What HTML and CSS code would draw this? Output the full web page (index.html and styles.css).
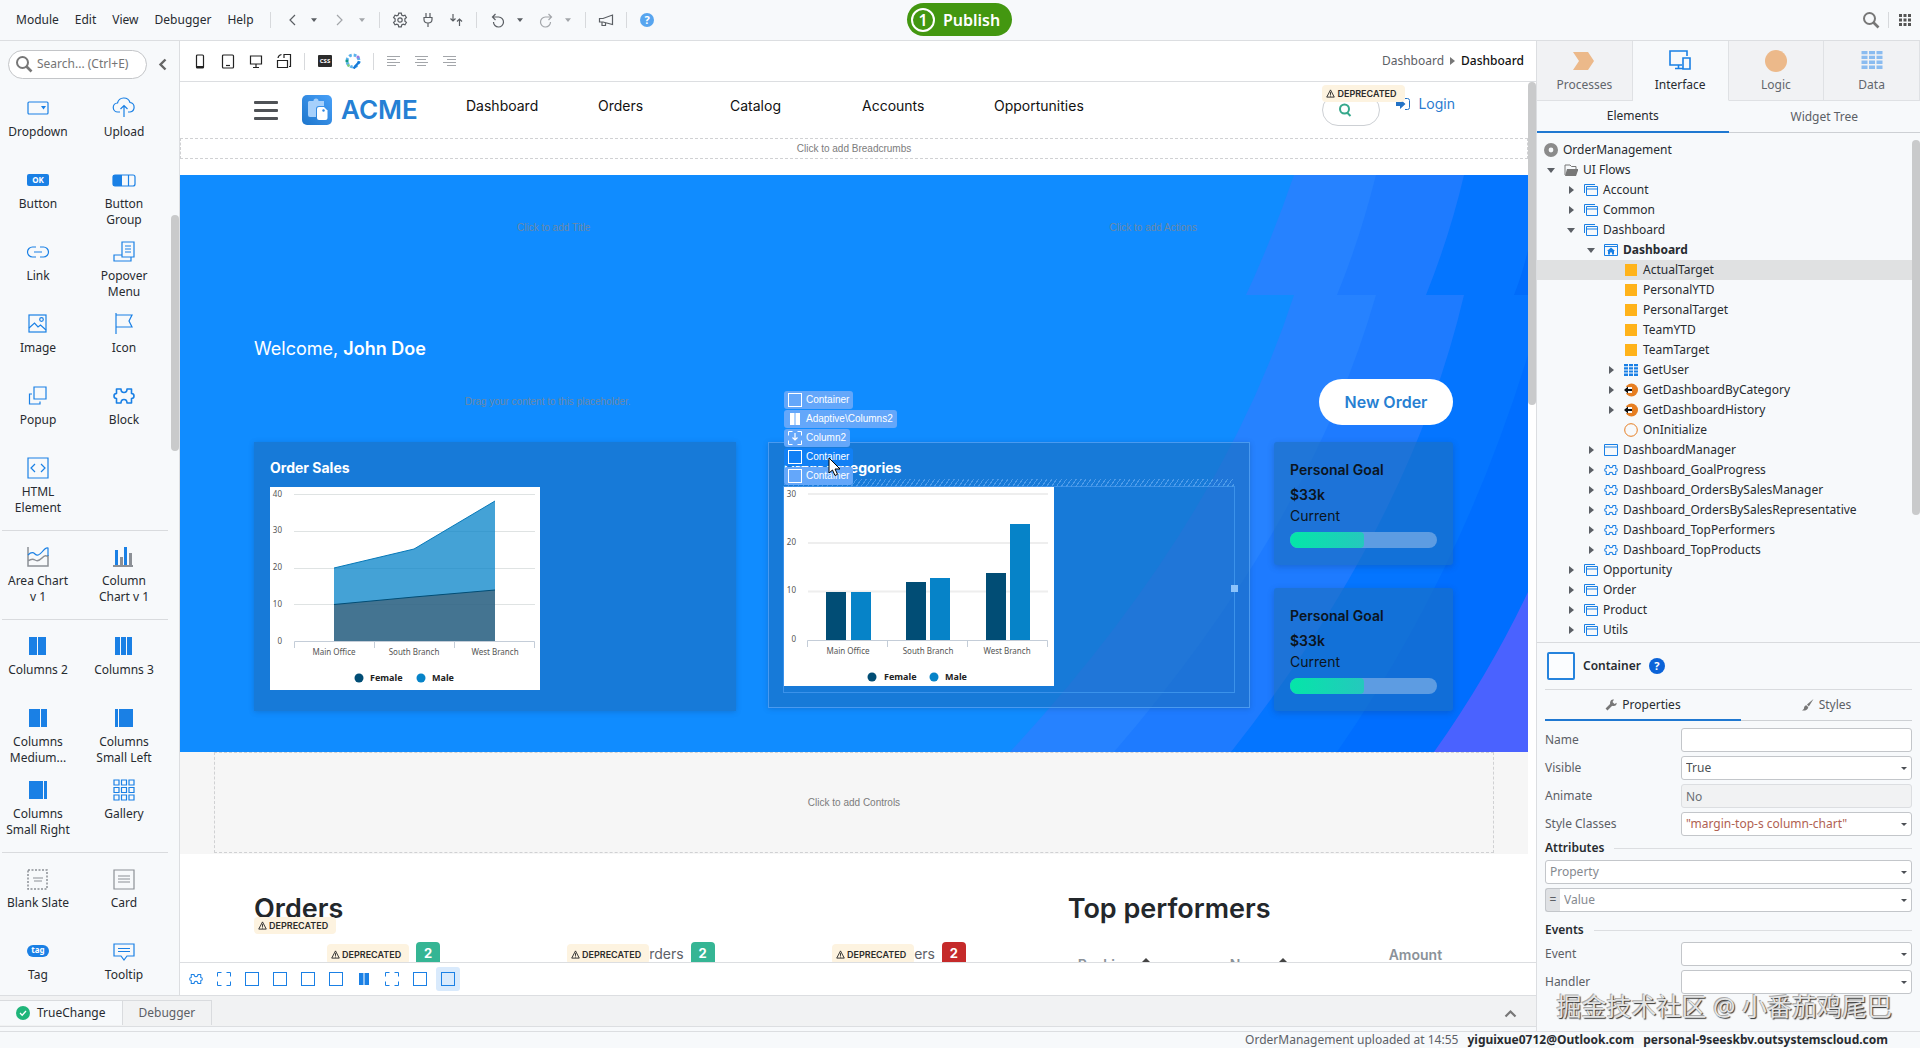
FILE: index.html
```html
<!DOCTYPE html>
<html lang="en">
<head>
    <meta charset="UTF-8">
    <meta name="viewport" content="width=device-width, initial-scale=1.0">
    <title>OrderManagement</title>
    <link rel="stylesheet" href="styles.css">
</head>
<body>
    <svg class="sprite" aria-hidden="true">
        <symbol id="caret" viewBox="0 0 8 5"><path d="M0 0h8L4 5z" fill="currentColor"/></symbol>
        <symbol id="search" viewBox="0 0 18 18"><circle cx="7.5" cy="7.5" r="5.5" fill="none" stroke="currentColor" stroke-width="2"/><path d="M11.5 11.5l5 5" stroke="currentColor" stroke-width="2.6"/></symbol>
        <symbol id="puzzle" viewBox="0 0 22 18"><path d="M3.500 2H8q0 3.500 3 3.500T14 2h4.500v4.500q2.500 0 2.500 2.500t-2.500 2.500V16H14q0-3.500-3-3.500T8 16H3.500v-4.500Q1 11.500 1 9t2.500-2.500z" fill="none" stroke="currentColor" stroke-width="1.600" stroke-linejoin="round"/></symbol>
        <symbol id="box" viewBox="0 0 14 14"><rect x=".5" y=".5" width="13" height="13" fill="none" stroke="currentColor"/></symbol>
        <symbol id="frame" viewBox="0 0 14 14"><path d="M.5 4.500v-4h4M9.500.5h4v4M13.500 9.500v4h-4M4.500 13.500h-4v-4" fill="none" stroke="currentColor"/></symbol>
        <symbol id="cols" viewBox="0 0 14 14"><path d="M2 1h4.500v12H2zM7.500 1H12v12H7.500z" fill="currentColor"/></symbol>
        <symbol id="flow" viewBox="0 0 14 14"><path d="M.5 10V1.500H11M2.500 3.500h11v9h-11zM2.500 6h11" fill="none" stroke="currentColor"/></symbol>
        <symbol id="screen" viewBox="0 0 14 14"><path d="M.5 1.500h13v11H.5zM.5 4h13" fill="none" stroke="currentColor"/></symbol>
        <symbol id="home" viewBox="0 0 14 14"><path d="M.5 1.500h13v11H.5zM.5 3.500h13" fill="none" stroke="currentColor"/><path d="M7 4.500l4 3.500h-1v3.500H8V9.500H6v2H4V8H3z" fill="currentColor"/></symbol>
        <symbol id="grid" viewBox="0 0 14 12"><path d="M0 0h4v2.200H0zM5 0h4v2.200H5zM10 0h4v2.200h-4zM0 3.200h4v2.200H0zM5 3.200h4v2.200H5zM10 3.200h4v2.200h-4zM0 6.400h4v2.200H0zM5 6.400h4v2.200H5zM10 6.400h4v2.200h-4zM0 9.600h4V12H0zM5 9.600h4V12H5zM10 9.600h4V12h-4z" fill="currentColor"/></symbol>
        <symbol id="fetch" viewBox="0 0 14 14"><circle cx="7.500" cy="7" r="6.500" fill="#e67e22"/><path d="M1 4h7v6H1z" fill="#f7f9fb"/><path d="M0 7l4-3.500V6h4v2H4v2.500z" fill="#111"/></symbol>
        <symbol id="ring" viewBox="0 0 14 14"><circle cx="7" cy="7" r="6.300" fill="none" stroke="#e67e22" stroke-width="1"/></symbol>
        <symbol id="warn" viewBox="0 0 10 10"><path d="M5 1l4.200 8H.8zM5 3.500v3M5 7.300v1" fill="none" stroke="#222"/></symbol>
    </svg>

    <header class="menubar">
        <nav class="menus">
            <button>Module</button><button>Edit</button><button>View</button><button>Debugger</button><button>Help</button>
        </nav>
        <div class="tools history">
            <button class="tool" aria-label="Back"><svg width="8" height="12"><path d="M7 1L2 6l5 5" class="ln"/></svg></button>
            <button class="tool drop" aria-label="Back history"><svg width="6" height="4"><use href="#caret"/></svg></button>
            <button class="tool off" aria-label="Forward"><svg width="8" height="12"><path d="M1 1l5 5-5 5" class="ln"/></svg></button>
            <button class="tool drop off" aria-label="Forward history"><svg width="6" height="4"><use href="#caret"/></svg></button>
        </div>
        <div class="tools">
            <button class="tool" aria-label="Settings"><svg width="16" height="16"><path d="M6.700 1.200h2.600l.4 1.900 1.500.8 1.800-.7 1.400 2.300-1.500 1.200v2.600l1.500 1.200-1.400 2.300-1.800-.7-1.500.8-.4 1.900H6.700l-.4-1.900-1.500-.8-1.800.7-1.400-2.300 1.500-1.200V6.700L1.600 5.500 3 3.200l1.800.7 1.500-.8z" class="ln"/><circle cx="8" cy="8" r="2.200" class="ln"/></svg></button>
            <button class="tool" aria-label="Connect"><svg width="12" height="16"><path d="M4 1v4M8 1v4M2 5.500h8v2q0 3.500-4 3.500T2 7.500zM6 11v4" class="ln"/></svg></button>
            <button class="tool" aria-label="Merge"><svg width="14" height="14"><path d="M4 1v7M1.500 5.500L4 8l2.500-2.500M10.500 13V6M8 8.500L10.500 6 13 8.500" class="ln"/></svg></button>
        </div>
        <div class="tools history">
            <button class="tool" aria-label="Undo"><svg width="14" height="15"><path d="M1.500 4h6.200a5 5 0 1 1-5.200 5M4.500 1l-3 3 3 3" class="ln"/></svg></button>
            <button class="tool drop" aria-label="Undo history"><svg width="6" height="4"><use href="#caret"/></svg></button>
            <button class="tool off" aria-label="Redo"><svg width="14" height="15"><path d="M12.500 4H6.300a5 5 0 1 0 5.200 5M9.500 1l3 3-3 3" class="ln"/></svg></button>
            <button class="tool drop off" aria-label="Redo history"><svg width="6" height="4"><use href="#caret"/></svg></button>
        </div>
        <div class="tools">
            <button class="tool" aria-label="News"><svg width="16" height="13"><path d="M14.500 1v9.500L5 8H1.500V4.500H5zM4 8v3.500h3.500V9" class="ln"/></svg></button>
        </div>
        <div class="tools">
            <button class="help" aria-label="Help">?</button>
        </div>
        <button class="publish"><span>1</span>Publish</button>
        <div class="menubar-right">
            <button class="tool" aria-label="Search"><svg width="18" height="18"><use href="#search"/></svg></button>
            <button class="tool apps" aria-label="Apps"><svg width="12" height="12"><path d="M0 0h3v3H0zM4.500 0h3v3h-3zM9 0h3v3H9zM0 4.500h3v3H0zM4.500 4.500h3v3h-3zM9 4.500h3v3H9zM0 9h3v3H0zM4.500 9h3v3h-3zM9 9h3v3H9z" fill="#555"/></svg></button>
        </div>
    </header>

    <div class="workspace">
        <div class="left">
            <div class="upper">
                <aside class="palette">
                    <div class="palette-search">
                        <label class="searchbox"><svg width="18" height="18"><use href="#search"/></svg><input type="text" placeholder="Search... (Ctrl+E)" aria-label="Search widgets"></label>
                        <button class="tool" aria-label="Collapse"><svg width="9" height="13"><path d="M7.500 1.500l-5 5 5 5" fill="none" stroke="#666" stroke-width="2.400"/></svg></button>
                    </div>
                    <div class="widgets">
                        <button class="widget"><svg viewBox="0 0 24 24"><rect x="2" y="6" width="20" height="12" rx="1" class="ln"/><path d="M15 10h5l-2.500 3.500z" fill="currentColor"/></svg><span>Dropdown</span></button>
                        <button class="widget"><svg viewBox="0 0 24 24"><path d="M8 16H6a4.500 4.500 0 0 1-.5-9 6.500 6.500 0 0 1 12.500-.5A4.800 4.800 0 0 1 18 16h-2M12 21V10M8.500 13L12 9.500l3.500 3.500" class="ln"/></svg><span>Upload</span></button>
                        <button class="widget"><svg viewBox="0 0 24 24"><rect x="1" y="6" width="22" height="12" rx="2" fill="currentColor"/><text x="12" y="15" class="ok">OK</text></svg><span>Button</span></button>
                        <button class="widget"><svg viewBox="0 0 24 24"><rect x="1" y="7" width="22" height="11" rx="2" class="ln"/><path d="M1 7h9v11H1z" fill="currentColor"/><path d="M16.500 7v11" class="ln"/></svg><span>Button<br>Group</span></button>
                        <button class="widget"><svg viewBox="0 0 24 24"><path d="M10 7H6.500a5 5 0 0 0 0 10H10M14 7h3.500a5 5 0 0 1 0 10H14M8 12h8" class="ln"/></svg><span>Link</span></button>
                        <button class="widget"><svg viewBox="0 0 24 24"><path d="M10 2h12v15H10zM10 15H2v6h17v-4M13 6h6M13 9h6M13 12h6" class="ln"/></svg><span>Popover<br>Menu</span></button>
                        <button class="widget"><svg viewBox="0 0 24 24"><rect x="3" y="3" width="17" height="17" class="ln"/><circle cx="15.500" cy="7.500" r="1.800" class="ln"/><path d="M3 16l5.500-5 3.500 4 2.500-2 5.500 5" class="ln"/></svg><span>Image</span></button>
                        <button class="widget"><svg viewBox="0 0 24 24"><path d="M4 1v21M4 3h16l-3 6 3 6H4" class="ln"/></svg><span>Icon</span></button>
                        <button class="widget"><svg viewBox="0 0 24 24"><path d="M8 3h12v12H8zM6 10H3.500v10H14v-2.500" class="ln"/></svg><span>Popup</span></button>
                        <button class="widget"><svg viewBox="0 0 24 24"><use href="#puzzle" x="1" y="3" width="22" height="18"/></svg><span>Block</span></button>
                        <button class="widget"><svg viewBox="0 0 24 24"><path d="M2 2h20v20H2zM9 8l-4 4 4 4M15 8l4 4-4 4" class="ln"/></svg><span>HTML<br>Element</span></button>
                    </div>
                    <div class="widgets">
                        <button class="widget"><svg viewBox="0 0 24 24"><path d="M2 2v19h20V10M2 16q4-3 7-1t7-2 6-1" fill="none" stroke="#8c9096" stroke-width="1.500"/><path d="M2 10q4-4 7-1t7-2 6-4v8" class="ln"/></svg><span>Area Chart<br>v 1</span></button>
                        <button class="widget"><svg viewBox="0 0 24 24"><path d="M3 5h3v15H3zM12 2h3v18h-3z" fill="currentColor"/><path d="M8 12h3v8H8zM17 8h3v12h-3zM1 20h20v2H1z" fill="#8c9096"/></svg><span>Column<br>Chart v 1</span></button>
                    </div>
                    <div class="widgets">
                        <button class="widget"><svg viewBox="0 0 24 24"><path d="M3 3h8v18H3zM12 3h8v18h-8z" fill="currentColor"/></svg><span>Columns 2</span></button>
                        <button class="widget"><svg viewBox="0 0 24 24"><path d="M3 3h5v18H3zM9 3h5v18H9zM15 3h5v18h-5z" fill="currentColor"/></svg><span>Columns 3</span></button>
                        <button class="widget"><svg viewBox="0 0 24 24"><path d="M3 3h11v18H3zM15 3h6v18h-6z" fill="currentColor"/></svg><span>Columns<br>Medium...</span></button>
                        <button class="widget"><svg viewBox="0 0 24 24"><path d="M3 3h3v18H3zM7 3h14v18H7z" fill="currentColor"/></svg><span>Columns<br>Small Left</span></button>
                        <button class="widget"><svg viewBox="0 0 24 24"><path d="M3 3h14v18H3zM18 3h3v18h-3z" fill="currentColor"/></svg><span>Columns<br>Small Right</span></button>
                        <button class="widget"><svg viewBox="0 0 24 24"><path d="M2 2h5v5H2zM9.500 2h5v5h-5zM17 2h5v5h-5zM2 9.500h5v5H2zM9.500 9.500h5v5h-5zM17 9.500h5v5h-5zM2 17h5v5H2zM9.500 17h5v5h-5zM17 17h5v5h-5z" class="ln"/></svg><span>Gallery</span></button>
                    </div>
                    <div class="widgets last">
                        <button class="widget gray"><svg viewBox="0 0 24 24"><rect x="2" y="3" width="19" height="19" fill="none" stroke="currentColor" stroke-width="1.500" stroke-dasharray="2 1.500"/><path d="M7 11h10M8 14h8" class="ln"/></svg><span>Blank Slate</span></button>
                        <button class="widget gray"><svg viewBox="0 0 24 24"><path d="M2 3h20v19H2zM6 9h12M6 12h12M6 15h12" class="ln"/></svg><span>Card</span></button>
                        <button class="widget"><svg viewBox="0 0 24 24"><rect x="1" y="6" width="22" height="12" rx="6" fill="currentColor"/><text x="12" y="14" class="ok">tag</text></svg><span>Tag</span></button>
                        <button class="widget"><svg viewBox="0 0 24 24"><path d="M2 5h20v12h-7l-3 4-3-4H2zM6 9.500h12M6 12.500h12" class="ln"/></svg><span>Tooltip</span></button>
                    </div>
                    <div class="bar palette-bar"></div>
                </aside>

                <main class="editor">
                    <div class="editor-tools">
                        <button class="tool dark" aria-label="Phone"><svg width="10" height="15"><rect x="1.500" y="1" width="7" height="13" rx="1" class="ln"/><path d="M1.500 12h7v2h-7z" fill="currentColor"/></svg></button>
                        <button class="tool dark" aria-label="Tablet"><svg width="14" height="15"><rect x="1.500" y="1" width="11" height="13" rx="1" class="ln"/><path d="M5 11.500h4" class="ln"/></svg></button>
                        <button class="tool dark" aria-label="Desktop"><svg width="14" height="15"><path d="M1.500 2h11v8h-11zM7 10v3M4 13.500h6" class="ln"/></svg></button>
                        <button class="tool dark" aria-label="Rotate"><svg width="16" height="16"><path d="M1.500 7.500h10v7h-10zM8 5V1.500h6.500v12H13M2 5q.5-3 3.500-3.500" class="ln"/></svg></button>
                        <span class="sep"></span>
                        <button class="css-btn">CSS</button>
                        <button class="tool" aria-label="Theme"><svg width="16" height="16"><circle cx="8" cy="8" r="6" fill="none" stroke="#5bb2ec" stroke-width="3" stroke-dasharray="2.700 2.010"/><path d="M8.500 15.500l6-7" stroke="#1679d8" stroke-width="2.400"/><circle cx="2" cy="8" r="1.600" fill="#0f9a8a"/><circle cx="3.500" cy="12.500" r="1.400" fill="#7fc97f"/><circle cx="13" cy="4" r="1.600" fill="#9d7ae0"/></svg></button>
                        <span class="sep"></span>
                        <button class="tool off" aria-label="Align left"><svg width="14" height="12"><path d="M0 1.500h13M0 4.500h9M0 7.500h13M0 10.500h9" class="ln"/></svg></button>
                        <button class="tool off" aria-label="Align center"><svg width="14" height="12"><path d="M0 1.500h13M2 4.500h9M0 7.500h13M2 10.500h9" class="ln"/></svg></button>
                        <button class="tool off" aria-label="Align right"><svg width="14" height="12"><path d="M0 1.500h13M4 4.500h9M0 7.500h13M4 10.500h9" class="ln"/></svg></button>
                        <div class="crumbs"><span>Dashboard</span><svg width="5" height="8"><path d="M0 0l5 4-5 4z" fill="#777"/></svg><b>Dashboard</b></div>
                    </div>

                    <div class="canvas">
                        <div class="page">
                            <header class="app-header">
                                <button class="burger" aria-label="Menu"><i></i><i></i><i></i></button>
                                <svg class="logo" viewBox="0 0 30 30"><defs><linearGradient id="lg" x1="0" y1="1" x2="1" y2="0"><stop offset="0" stop-color="#1e76cc"/><stop offset="1" stop-color="#48a0f8"/></linearGradient></defs><rect width="30" height="30" rx="5" fill="url(#lg)"/><path d="M7 6h4.500a2.500 2.500 0 0 1 5 0H22v5h-5q-3 0-3 3v8H8q-2 0-2-2V7z" fill="#a6d0fb"/><path d="M17 12h5l3.500 3.500V23q0 2-2 2H17q-2 0-2-2v-9q0-2 2-2z" fill="#fff"/><circle cx="21.500" cy="15.500" r="1.200" fill="#2f86df"/></svg>
                                <span class="brand">ACME</span>
                                <nav class="app-nav"><a href="#">Dashboard</a><a href="#">Orders</a><a href="#">Catalog</a><a href="#">Accounts</a><a href="#">Opportunities</a></nav>
                                <div class="header-end">
                                    <div class="app-search">
                                        <svg width="14" height="14" viewBox="0 0 14 14"><circle cx="6.500" cy="6" r="4.500" fill="none" stroke="#35a88b" stroke-width="2"/><path d="M9 9.500l3.500 3.500" stroke="#35a88b" stroke-width="2"/></svg>
                                        <span class="deprecated"><svg width="9" height="9"><use href="#warn"/></svg>DEPRECATED</span>
                                    </div>
                                    <a class="login" href="#"><svg width="14" height="12"><path d="M0 4h4V1l5.500 5L4 11V8H0z" fill="#2272c6"/><path d="M9 .5h2.500q2 0 2 2v7q0 2-2 2H9" fill="none" stroke="#2272c6"/></svg>Login</a>
                                </div>
                            </header>
                            <div class="slot breadcrumbs">Click to add Breadcrumbs</div>

                            <section class="hero">
                                <svg class="stripes" viewBox="0 0 548 577" aria-hidden="true">
                                    <path d="M314 0h234v120H266Q292 64 314 0z" fill="#2682ff"/>
                                    <path d="M396 0h152v120H357Q380 64 396 0z" fill="#1e7bff"/>
                                    <path d="M484 0h64v120H446Q470 60 484 0z" fill="#0475ff"/>
                                    <path d="M548 75v45h-14q8-20 14-45z" fill="#006cfb"/>
                                    <path d="M314 120h234v457H30Q240 350 314 120z" fill="#2682ff"/>
                                    <path d="M396 120h152v457H134Q330 350 396 120z" fill="#1e7bff"/>
                                    <path d="M484 120h64v457H251Q430 350 484 120z" fill="#0475ff"/>
                                    <path d="M548 180v397H357Q480 400 548 180z" fill="#006eff"/>
                                    <path d="M548 417v160h-94q54-76 94-160z" fill="#4a62ff"/>
                                </svg>
                                <div class="hero-row">
                                    <div class="ghost">Click to add Title</div>
                                    <div class="ghost">Click to add Actions</div>
                                </div>
                                <p class="welcome">Welcome, <b>John Doe</b></p>
                                <div class="hero-actions">
                                    <div class="ghost">Drag your content to this placeholder.</div>
                                    <button class="new-order">New Order</button>
                                </div>
                                <div class="cards">
                                    <div class="charts">
                                        <article class="card">
                                            <h3>Order Sales</h3>
                                            <svg class="chart chart-area" width="270" height="203" viewBox="0 0 270 203">
                                                <path d="M24 7.500h241M24 44.500h241M24 81.500h241M24 117.500h241" class="gridline"/>
                                                <path d="M64 81l80-19 81-48v140H64z" fill="#0683c8" fill-opacity=".75"/>
                                                <path d="M64 117.500l80-7.500 81-7v51H64z" fill="#454f5a" fill-opacity=".55"/>
                                                <path d="M64 81l80-19 81-48" fill="none" stroke="#0678b8"/>
                                                <path d="M64 117.500l80-7.500 81-7" fill="none" stroke="#014d75"/>
                                                <path d="M24.500 161v-6.500h240v6.500M104.500 154.500v6.500M184.500 154.500v6.500" class="axis"/>
                                                <g class="ylab"><text x="12" y="10">40</text><text x="12" y="46">30</text><text x="12" y="83">20</text><text x="12" y="120">10</text><text x="12" y="157">0</text></g>
                                                <g class="xlab"><text x="64" y="168">Main Office</text><text x="144" y="168">South Branch</text><text x="225" y="168">West Branch</text></g>
                                                <circle cx="89" cy="191" r="4.500" fill="#014d75"/><circle cx="151" cy="191" r="4.500" fill="#0683c8"/>
                                                <g class="legend"><text x="100" y="194">Female</text><text x="162" y="194">Male</text></g>
                                            </svg>
                                        </article>
                                        <article class="card outlined">
                                            <h3>Order Categories</h3>
                                            <div class="selected-box">
                                                <svg class="chart" width="270" height="199" viewBox="0 0 270 199">
                                                    <path d="M24 7h240M24 56h240M24 104.500h240" class="gridline thick"/>
                                                    <path d="M42 105h20v48H42zM122 95h20v58h-20zM202 86h20v67h-20z" fill="#014d75"/>
                                                    <path d="M67 105h20v48H67zM146 91h20v62h-20zM226 37h20v116h-20z" fill="#0683c8"/>
                                                    <path d="M23.500 160v-6.500h240v6.500M103.500 153.500v6.500M183.500 153.500v6.500" class="axis"/>
                                                    <g class="ylab"><text x="12" y="10">30</text><text x="12" y="58">20</text><text x="12" y="106">10</text><text x="12" y="155">0</text></g>
                                                    <g class="xlab"><text x="64" y="167">Main Office</text><text x="144" y="167">South Branch</text><text x="223" y="167">West Branch</text></g>
                                                    <circle cx="88" cy="190" r="4.500" fill="#014d75"/><circle cx="150" cy="190" r="4.500" fill="#0683c8"/>
                                                    <g class="legend"><text x="100" y="193">Female</text><text x="161" y="193">Male</text></g>
                                                </svg>
                                                <span class="handle"></span>
                                            </div>
                                            <div class="chips">
                                                <span class="chip"><svg width="14" height="14"><use href="#box"/></svg>Container</span>
                                                <span class="chip"><svg width="14" height="14"><use href="#cols"/></svg>Adaptive\Columns2</span>
                                                <span class="chip"><svg width="14" height="14"><use href="#frame"/><path d="M7 2v7M4.500 6.500L7 9l2.500-2.500" class="ln"/></svg>Column2</span>
                                                <span class="chip active"><svg width="14" height="14"><use href="#box"/></svg>Container</span>
                                                <span class="chip"><svg width="14" height="14"><use href="#box"/></svg>Container</span>
                                            </div>
                                            <svg class="cursor" width="13" height="20"><path d="M1 1v15l3.500-3 2.500 5.500 2.500-1.200L7 12h5z" fill="#fff" stroke="#000"/></svg>
                                        </article>
                                    </div>
                                    <div class="goals">
                                        <article class="goal"><h4>Personal Goal</h4><strong>$33k</strong><span>Current</span><div class="meter"><i></i></div></article>
                                        <article class="goal"><h4>Personal Goal</h4><strong>$33k</strong><span>Current</span><div class="meter"><i></i></div></article>
                                    </div>
                                </div>
                            </section>

                            <section class="controls"><div class="slot">Click to add Controls</div></section>

                            <section class="lists">
                                <div class="orders">
                                    <h2>Orders<span class="deprecated"><svg width="9" height="9"><use href="#warn"/></svg>DEPRECATED</span></h2>
                                    <div class="order-tabs">
                                        <div><span class="deprecated"><svg width="9" height="9"><use href="#warn"/></svg>DEPRECATED</span><b class="count">2</b></div>
                                        <div><span class="deprecated"><svg width="9" height="9"><use href="#warn"/></svg>DEPRECATED</span>rders<b class="count">2</b></div>
                                        <div><span class="deprecated"><svg width="9" height="9"><use href="#warn"/></svg>DEPRECATED</span>ers<b class="count red">2</b></div>
                                    </div>
                                </div>
                                <div class="performers">
                                    <h2>Top performers</h2>
                                    <table>
                                        <tr><th class="sortable">Ranking<i></i></th><th class="sortable">Name<i></i></th><th class="amount">Amount</th></tr>
                                    </table>
                                </div>
                            </section>
                        </div>
                        <div class="gutter"><div class="bar canvas-bar"></div></div>
                    </div>

                    <div class="path">
                        <button aria-label="Block"><svg width="14" height="14"><use href="#puzzle"/></svg></button>
                        <button aria-label="Placeholder"><svg width="14" height="14"><use href="#frame"/></svg></button>
                        <button aria-label="Container"><svg width="14" height="14"><use href="#box"/></svg></button>
                        <button aria-label="Container"><svg width="14" height="14"><use href="#box"/></svg></button>
                        <button aria-label="Container"><svg width="14" height="14"><use href="#box"/></svg></button>
                        <button aria-label="Container"><svg width="14" height="14"><use href="#box"/></svg></button>
                        <button aria-label="Columns"><svg width="14" height="14"><use href="#cols"/></svg></button>
                        <button aria-label="Placeholder"><svg width="14" height="14"><use href="#frame"/></svg></button>
                        <button aria-label="Container"><svg width="14" height="14"><use href="#box"/></svg></button>
                        <button class="current" aria-label="Container"><svg width="14" height="14"><use href="#box"/></svg></button>
                    </div>
                </main>
            </div>

            <div class="dock">
                <button class="dock-tab on"><svg width="14" height="14"><circle cx="7" cy="7" r="7" fill="#1fb57a"/><path d="M4 7l2.200 2.200L10 5" fill="none" stroke="#fff" stroke-width="1.300"/></svg>TrueChange</button>
                <button class="dock-tab">Debugger</button>
                <button class="tool expand" aria-label="Expand"><svg width="13" height="9"><path d="M1.500 7.500l5-5 5 5" fill="none" stroke="#777" stroke-width="2.200"/></svg></button>
            </div>
        </div>

        <aside class="inspector">
            <div class="layers">
                <button><svg width="22" height="20"><path d="M0 1h15l6 9-6 9H0l6-9z" fill="#ecb98a"/></svg>Processes</button>
                <button class="on"><svg width="22" height="20"><path d="M13 15H1V1h17v5M6 18.500h8M9.500 15v3M14 8h7v11h-7z" fill="none" stroke="#1a80e5" stroke-width="1.600"/></svg>Interface</button>
                <button><svg width="22" height="22"><circle cx="11" cy="11" r="11" fill="#ecb98a"/></svg>Logic</button>
                <button><svg width="22" height="18" class="pale"><use href="#grid"/></svg>Data</button>
            </div>
            <div class="subtabs"><button class="on">Elements</button><button>Widget Tree</button></div>

            <div class="tree-wrap">
                <ul class="tree">
                    <li class="l0"><svg class="ic"><circle cx="7" cy="7" r="4.700" fill="none" stroke="#8b8b8b" stroke-width="4.600"/></svg>OrderManagement</li>
                    <li class="l0 open"><svg class="ic"><path d="M1 12V2h5l1.500 1.500H12V6" fill="none" stroke="#777"/><path d="M3 6h11.500L12 13H1z" fill="#777"/></svg>UI Flows</li>
                    <li class="l1 shut"><svg class="ic"><use href="#flow"/></svg>Account</li>
                    <li class="l1 shut"><svg class="ic"><use href="#flow"/></svg>Common</li>
                    <li class="l1 open"><svg class="ic"><use href="#flow"/></svg>Dashboard</li>
                    <li class="l2 open"><svg class="ic"><use href="#home"/></svg><b>Dashboard</b></li>
                    <li class="l4 picked"><i class="sq"></i>ActualTarget</li>
                    <li class="l4"><i class="sq"></i>PersonalYTD</li>
                    <li class="l4"><i class="sq"></i>PersonalTarget</li>
                    <li class="l4"><i class="sq"></i>TeamYTD</li>
                    <li class="l4"><i class="sq"></i>TeamTarget</li>
                    <li class="l3 shut"><svg class="ic"><use href="#grid"/></svg>GetUser</li>
                    <li class="l3 shut"><svg class="ic"><use href="#fetch"/></svg>GetDashboardByCategory</li>
                    <li class="l3 shut"><svg class="ic"><use href="#fetch"/></svg>GetDashboardHistory</li>
                    <li class="l4"><svg class="ic"><use href="#ring"/></svg>OnInitialize</li>
                    <li class="l2 shut"><svg class="ic"><use href="#screen"/></svg>DashboardManager</li>
                    <li class="l2 shut"><svg class="ic"><use href="#puzzle"/></svg>Dashboard_GoalProgress</li>
                    <li class="l2 shut"><svg class="ic"><use href="#puzzle"/></svg>Dashboard_OrdersBySalesManager</li>
                    <li class="l2 shut"><svg class="ic"><use href="#puzzle"/></svg>Dashboard_OrdersBySalesRepresentative</li>
                    <li class="l2 shut"><svg class="ic"><use href="#puzzle"/></svg>Dashboard_TopPerformers</li>
                    <li class="l2 shut"><svg class="ic"><use href="#puzzle"/></svg>Dashboard_TopProducts</li>
                    <li class="l1 shut"><svg class="ic"><use href="#flow"/></svg>Opportunity</li>
                    <li class="l1 shut"><svg class="ic"><use href="#flow"/></svg>Order</li>
                    <li class="l1 shut"><svg class="ic"><use href="#flow"/></svg>Product</li>
                    <li class="l1 shut"><svg class="ic"><use href="#flow"/></svg>Utils</li>
                </ul>
                <div class="gutter"><div class="bar tree-bar"></div></div>
            </div>

            <section class="props">
                <div class="props-head"><span class="big-box"></span><b>Container</b><button class="help deep" aria-label="Help">?</button></div>
                <div class="prop-tabs">
                    <button class="on"><svg width="12" height="12"><path d="M1.500 10.500L7 5" stroke="#777" stroke-width="2.600"/><path d="M9 .5a3.300 3.300 0 1 0 2.700 3.300L9.500 5 7.500 3z" fill="#777"/></svg>Properties</button>
                    <button><svg width="12" height="12"><path d="M11.500 0L5 5.500 6.800 7.500z" fill="#777"/><path d="M4.300 6.200l2 2Q5.500 12 0 11.500 2.500 10 2.200 8q.6-1.600 2.100-1.800z" fill="#777"/></svg>Styles</button>
                </div>
                <div class="field"><label for="f-name">Name</label><input id="f-name" type="text"></div>
                <div class="field"><label for="f-vis">Visible</label><span class="combo"><select id="f-vis"><option>True</option></select></span></div>
                <div class="field"><label for="f-anim">Animate</label><input id="f-anim" type="text" value="No" disabled></div>
                <div class="field"><label for="f-cls">Style Classes</label><span class="combo"><select id="f-cls" class="code"><option>"margin-top-s column-chart"</option></select></span></div>
                <h5>Attributes</h5>
                <div class="field"><span class="combo"><select class="hint" aria-label="Property"><option>Property</option></select></span></div>
                <div class="field"><span class="combo with-eq"><span class="eq">=</span><select class="hint" aria-label="Value"><option>Value</option></select></span></div>
                <h5 class="events">Events</h5>
                <div class="field"><label for="f-ev">Event</label><span class="combo"><select id="f-ev"><option></option></select></span></div>
                <div class="field"><label for="f-hd">Handler</label><span class="combo"><select id="f-hd"><option></option></select></span></div>
            </section>
        </aside>
    </div>

    <footer class="status"><span>OrderManagement uploaded at 14:55</span><b>yiguixue0712@Outlook.com</b><b>personal-9seeskbv.outsystemscloud.com</b></footer>
    <div class="watermark">掘金技术社区 @ 小番茄鸡尾巴</div>
</body>
</html>
```
FILE: styles.css
```css
* {
    box-sizing: border-box;
}

body {
    margin: 0;
    height: 100vh;
    display: flex;
    flex-direction: column;
    overflow: hidden;
    background: #f7f9fb;
    color: #272b30;
    font: 12px/16px "Noto Sans", sans-serif;
}

button, input, select {
    font: inherit;
    color: inherit;
    margin: 0;
}
button {
    background: none;
    border: 0;
    padding: 0;
    white-space: nowrap;
}
svg { display: block; flex: none; }
a { text-decoration: none; }
.sprite { position: absolute; width: 0; height: 0; }
.ln { fill: none; stroke: currentColor; stroke-width: 1.2; }

.bar {
    width: 8px;
    border-radius: 4px;
    background: #c9cacb;
}
.gutter { width: 8px; flex: none; }

/* menu bar */
.menubar {
    position: relative;
    flex: none;
    height: 41px;
    display: flex;
    align-items: center;
    border-bottom: 1px solid #dcdee1;
    padding: 0 10px 0 16px;
}
.menus {
    display: flex;
    gap: 16px;
    width: 254px;
}
.tools {
    display: flex;
    align-items: center;
    height: 16px;
    border-left: 1px solid #d7d9dc;
    padding: 0 6px;
}
.tool {
    width: 28px;
    height: 24px;
    display: flex;
    align-items: center;
    justify-content: center;
    color: #5a5e63;
}
.tool.off { color: #a3a6aa; }
.tool.dark { color: #222; }
.history { padding: 0 7px 0 9px; }
.history .tool { width: 24px; }
.history .drop { width: 20px; }
.history .drop + .tool { margin-left: 4px; }
.help {
    width: 14px;
    height: 14px;
    margin: 0 7px;
    border-radius: 50%;
    background: #57a5ef;
    color: #fff;
    font-weight: bold;
    font-size: 11px;
    line-height: 14px;
}
.help.deep {
    width: 16px;
    height: 16px;
    line-height: 16px;
    background: #0b63d8;
}
.publish {
    position: absolute;
    left: 907px;
    top: 3px;
    height: 33px;
    padding: 0 12px 0 4px;
    display: flex;
    align-items: center;
    gap: 8px;
    border-radius: 17px;
    background: #439710;
    color: #fff;
    font-weight: 600;
    font-size: 16px;
}
.publish span {
    width: 24px;
    height: 24px;
    line-height: 20px;
    border: 2px solid #fff;
    border-radius: 50%;
}
.menubar-right {
    margin-left: auto;
    display: flex;
    align-items: center;
}
.menubar-right .tool { color: #777; }
.menubar-right .apps {
    width: 22px;
    height: 16px;
    margin-left: 3px;
    padding-left: 10px;
    border-left: 1px solid #d7d9dc;
}

.workspace {
    flex: 1;
    min-height: 0;
    display: flex;
}
.left {
    flex: 1;
    min-width: 0;
    display: flex;
    flex-direction: column;
}
.upper {
    flex: 1;
    min-height: 0;
    display: flex;
}

/* widget palette */
.palette {
    position: relative;
    width: 180px;
    flex: none;
    overflow: hidden;
    border-right: 1px solid #dcdee1;
}
.palette-search {
    display: flex;
    align-items: center;
    height: 49px;
    padding: 0 0 3px 8px;
}
.searchbox {
    width: 139px;
    height: 29px;
    display: flex;
    align-items: center;
    gap: 4px;
    padding-left: 6px;
    border: 1px solid #c3c5c8;
    border-radius: 15px;
    background: #fff;
    color: #777;
}
.searchbox input {
    width: 108px;
    border: 0;
    padding: 0;
    background: none;
}
.palette-search .tool { width: 31px; }
.widgets {
    display: grid;
    grid-template-columns: 72px 100px;
    padding: 8px 0;
    border-bottom: 1px solid #d9dbde;
    width: 166px;
    margin-left: 2px;
}
.palette-search + .widgets { padding-top: 0; }
.widgets.last { border: 0; }
.widget {
    height: 72px;
    padding-top: 6px;
    display: flex;
    flex-direction: column;
    align-items: center;
    justify-content: flex-start;
    gap: 4px;
    line-height: 16px;
}
.widget svg {
    width: 24px;
    height: 24px;
    color: #1a80e5;
}
.widget.gray svg { color: #8c9096; }
.ok {
    fill: #fff;
    font-size: 8px;
    font-weight: bold;
    text-anchor: middle;
}
.palette-bar {
    position: absolute;
    right: 0;
    top: 174px;
    height: 236px;
}

/* editor */
.editor {
    flex: 1;
    min-width: 0;
    display: flex;
    flex-direction: column;
    background: #fff;
}
.editor-tools {
    flex: none;
    height: 41px;
    padding: 0 12px 0 6px;
    display: flex;
    align-items: center;
    border-bottom: 1px solid #dcdee1;
}
.sep {
    width: 1px;
    height: 17px;
    margin: 0 6px;
    background: #d7d9dc;
}
.css-btn {
    width: 14px;
    height: 12px;
    margin: 0 7px;
    border-radius: 1px;
    background: #2b2b2b;
    color: #fff;
    font-size: 6px;
    line-height: 12px;
    font-weight: bold;
}
.crumbs {
    margin-left: auto;
    display: flex;
    align-items: center;
    gap: 6px;
    color: #5c6066;
}
.crumbs b { font-weight: 500; color: #111; }

.canvas {
    flex: 1;
    min-height: 0;
    display: flex;
    overflow: hidden;
}
.page {
    flex: 1;
    min-width: 0;
    font-family: Inter, sans-serif;
    font-size: 14px;
    line-height: 20px;
}
.canvas-bar { height: 323px; }

.app-header {
    height: 56px;
    padding: 0 73px 0 74px;
    display: flex;
    align-items: center;
}
.burger {
    width: 24px;
    margin-right: 24px;
    display: flex;
    flex-direction: column;
    gap: 5px;
}
.burger i {
    height: 3px;
    border-radius: 1px;
    background: #4f5256;
}
.logo { width: 30px; height: 30px; }
.brand {
    width: 134px;
    padding-left: 9px;
    color: #2580d4;
    font-size: 26px;
    font-weight: 600;
}
.app-nav {
    display: grid;
    grid-template-columns: repeat(5, 132px);
    margin-bottom: 8px;
}
.app-nav a { color: #111; }
.header-end {
    margin-left: auto;
    display: flex;
    gap: 16px;
    align-items: center;
}
.app-search {
    position: relative;
    width: 58px;
    height: 32px;
    padding: 8px 15px;
    border: 1px solid #cdd0d4;
    border-radius: 16px;
}
.app-search .deprecated {
    position: absolute;
    left: -1px;
    top: -10px;
}
.deprecated {
    display: inline-flex;
    align-items: center;
    gap: 2px;
    height: 17px;
    padding: 0 8px 0 4px;
    border-radius: 4px;
    background: #fdf3e0;
    color: #2b2b2b;
    font-size: 9px;
    line-height: 17px;
    font-weight: 600;
}
.login {
    display: flex;
    align-items: center;
    gap: 8px;
    margin-bottom: 12px;
    color: #2b7bd0;
}

.slot {
    display: flex;
    align-items: center;
    justify-content: center;
    border: 1px dashed #d0d1d3;
    color: #7c7c7c;
    font: 10px/12px "Liberation Sans", sans-serif;
}
.breadcrumbs { height: 21px; }

.hero {
    position: relative;
    height: 577px;
    margin-top: 16px;
    padding: 31px 75px 0 74px;
    background: #108cff;
}
.stripes {
    position: absolute;
    right: 0;
    top: 0;
    width: 548px;
    height: 577px;
}
.hero > div, .hero > p { position: relative; }
.hero-row {
    display: grid;
    grid-template-columns: 1fr 1fr;
}
.ghost {
    height: 44px;
    display: flex;
    align-items: center;
    justify-content: center;
    color: #6d89a6;
    font: 10px/12px "Liberation Sans", sans-serif;
}
.welcome {
    margin: 85px 0 17px;
    color: #fff;
    font-size: 18px;
    line-height: 27px;
}
.welcome b { font-weight: 600; }
.hero-actions {
    display: grid;
    grid-template-columns: 49fr 51fr;
    align-items: center;
    height: 46px;
}
.new-order {
    justify-self: end;
    width: 134px;
    height: 46px;
    border-radius: 23px;
    background: #fff;
    color: #2780d2;
    font-size: 16px;
    font-weight: 600;
}
.cards {
    display: flex;
    align-items: flex-start;
    gap: 24px;
    margin-top: 17px;
}
.charts {
    flex: 1;
    display: grid;
    grid-template-columns: 1fr 1fr;
    gap: 32px;
    align-items: start;
}
.card {
    position: relative;
    padding: 16px;
    background: rgba(28, 110, 190, 0.6);
    box-shadow: 0 1px 5px rgba(20, 70, 130, 0.3);
}
.card.outlined {
    outline: 1px solid #4a9af0;
    outline-offset: -1px;
}
.card h3 {
    margin: 0 0 9px;
    color: #fff;
    font-size: 14px;
    line-height: 20px;
    font-weight: 700;
}
.chart {
    background: #fff;
    font-family: "Noto Sans", sans-serif;
}
.chart-area { margin-bottom: 5px; }
.gridline { stroke: #dfe3e3; fill: none; }
.gridline.thick { stroke: #eee; stroke-width: 2; }
.axis { stroke: #c4cdd8; fill: none; }
.ylab, .xlab { font-size: 8px; fill: #555; text-anchor: middle; }
.ylab { text-anchor: end; }
.legend { font-size: 9px; font-weight: bold; fill: #222; }

.selected-box {
    position: relative;
    height: 205px;
    outline: 1px solid #3b92ea;
}
.selected-box::before {
    content: '';
    position: absolute;
    left: 0;
    right: 0;
    top: -8px;
    height: 8px;
    background: repeating-linear-gradient(125deg, transparent 0 3px, #4d9be9 3px 4px);
}
.handle {
    position: absolute;
    right: -4px;
    top: 98px;
    width: 7px;
    height: 7px;
    background: #8cc3fb;
}
.chips {
    position: absolute;
    left: 16px;
    top: -51px;
    display: flex;
    flex-direction: column;
    align-items: flex-start;
    gap: 1px;
}
.chip {
    height: 18px;
    padding: 0 4px;
    display: flex;
    align-items: center;
    gap: 4px;
    border-radius: 3px;
    background: #64a7fa;
    color: #fff;
    font: 10px/18px "Liberation Sans", sans-serif;
}
.chip.active { background: #1180f5; }
.cursor {
    position: absolute;
    left: 60px;
    top: 15px;
}

.goals {
    width: 179px;
    display: flex;
    flex-direction: column;
    gap: 23px;
}
.goal {
    height: 123px;
    padding: 16px;
    display: flex;
    flex-direction: column;
    border-radius: 3px;
    background: rgba(28, 110, 190, 0.6);
    box-shadow: 0 2px 6px rgba(20, 60, 120, 0.3);
    color: #0b1420;
}
.goal h4 {
    margin: 0 0 2px;
    line-height: 24px;
    font-size: 14px;
    font-weight: 600;
}
.goal strong { line-height: 22px; font-weight: 600; }
.meter {
    height: 16px;
    margin-top: 6px;
    border-radius: 8px;
    background: #5d9ce2;
    overflow: hidden;
}
.meter i {
    display: block;
    width: 50%;
    height: 100%;
    border-radius: 0 4px 4px 0;
    background: linear-gradient(to right, #04e6a8, #25c8bd);
}

.controls {
    padding: 0 34px 1px;
    background: #f6f6f6;
}
.controls .slot { height: 101px; }

.lists {
    display: grid;
    grid-template-columns: 813fr 385fr;
    padding: 39px 75px 0 74px;
}
.lists h2 {
    position: relative;
    margin: 0;
    font-size: 27px;
    line-height: 32px;
    font-weight: 600;
    color: #23272b;
}
.lists h2 .deprecated {
    position: absolute;
    left: 0;
    top: 24px;
}
.order-tabs {
    display: grid;
    grid-template-columns: 240px 265px auto;
    padding: 17px 0 0 73px;
    color: #5d6167;
}
.order-tabs > div {
    display: flex;
    align-items: flex-start;
    line-height: 23px;
}
.order-tabs .deprecated {
    height: 20px;
    margin-top: 2px;
}
.count {
    width: 24px;
    height: 24px;
    margin-left: 7px;
    border-radius: 4px;
    background: #35b594;
    color: #fff;
    font-size: 13px;
    line-height: 23px;
    text-align: center;
}
.count.red { background: #c52a2a; }
.performers table {
    width: 100%;
    table-layout: fixed;
    border-spacing: 0;
    margin-top: 19px;
}
.performers th {
    padding: 11px 0 0 10px;
    text-align: left;
    font-weight: 600;
    color: #8b9299;
    vertical-align: top;
}
.performers th:first-child { width: 152px; }
.performers th:nth-child(2) { width: 159px; }
.performers .amount { padding-top: 1px; }
.sortable i {
    display: inline-block;
    margin-left: 9px;
    border: 5px solid transparent;
    border-top: 0;
    border-bottom: 5px solid #444;
    vertical-align: 7px;
}

.path {
    flex: none;
    height: 33px;
    padding-left: 4px;
    display: flex;
    align-items: center;
    gap: 4px;
    border-top: 1px solid #dcdee1;
    color: #1a80e5;
}
.path button {
    width: 24px;
    height: 24px;
    padding: 5px;
    border-radius: 3px;
}
.path .current { background: #d9eafc; }

/* bottom dock */
.dock {
    flex: none;
    height: 36px;
    display: flex;
    align-items: flex-end;
    border-top: 1px solid #dcdee1;
    background: linear-gradient(#f1f2f3 30px, #dcdee1 30px 31px, #f7f9fb 31px);
    padding: 0 12px 6px 0;
}
.dock-tab {
    height: 25px;
    padding: 0 16px;
    display: flex;
    align-items: center;
    gap: 7px;
    border: 1px solid #d9dbde;
    border-width: 1px 1px 0 0;
    color: #5c6066;
}
.dock-tab.on {
    background: #f7f9fb;
    color: #272b30;
}
.dock .expand { margin-left: auto; }

/* inspector */
.inspector {
    width: 384px;
    flex: none;
    display: flex;
    flex-direction: column;
    border-left: 1px solid #dcdee1;
}
.layers {
    display: grid;
    grid-template-columns: repeat(4, 1fr);
    height: 60px;
}
.layers button {
    display: flex;
    flex-direction: column;
    align-items: center;
    justify-content: space-between;
    padding: 9px 0 7px;
    border: 1px solid #dfe1e4;
    border-width: 0 1px 1px 0;
    background: #f1f2f4;
    color: #62666c;
}
.layers button:nth-child(1) svg, .layers button:nth-child(4) svg { margin-top: 1px; }
.layers .on {
    background: #f7f9fb;
    border-bottom-color: #f7f9fb;
    color: #272b30;
}
.pale { color: #8bbcf0; }
.subtabs, .prop-tabs {
    display: grid;
    grid-template-columns: 1fr 1fr;
    height: 32px;
}
.subtabs button, .prop-tabs button {
    display: flex;
    align-items: center;
    justify-content: center;
    gap: 5px;
    border-bottom: 1px solid #cdd0d4;
    color: #5c6066;
}
.subtabs .on, .prop-tabs .on {
    border-bottom: 2px solid #1f78d1;
    color: #272b30;
}
.tree-wrap {
    flex: none;
    display: flex;
    height: 510px;
    padding-top: 7px;
    border-bottom: 1px solid #d9dbde;
}
.tree {
    flex: 1;
    margin: 0;
    padding: 0;
    list-style: none;
}
.tree li {
    display: flex;
    align-items: center;
    height: 20px;
    padding-left: 4px;
}
.tree .ic {
    width: 14px;
    height: 14px;
    margin: 0 5px 0 3px;
    color: #1a80e5;
}
.sq {
    width: 12px;
    height: 12px;
    margin: 0 6px 0 4px;
    background: #ffb31a;
}
.tree .l1 { padding-left: 24px; }
.tree .l2 { padding-left: 44px; }
.tree .l3 { padding-left: 64px; }
.tree .l4 { padding-left: 84px; }
.tree .open::before, .tree .shut::before {
    content: '';
    margin: 0 6px;
    border: 4px solid transparent;
    border-top: 5px solid #5c6066;
    border-bottom: 0;
}
.tree .shut::before {
    margin: 0 7px 0 8px;
    border: 4px solid transparent;
    border-left: 5px solid #5c6066;
    border-right: 0;
}
.picked { background: #e0e1e2; }
.tree-bar { height: 375px; }

.props { padding: 0 8px; }
.props-head {
    height: 47px;
    padding: 0 2px;
    display: flex;
    align-items: center;
    gap: 8px;
    border-bottom: 1px solid #d9dbde;
}
.big-box {
    width: 28px;
    height: 28px;
    border: 2px solid #2583dd;
    border-radius: 2px;
    background: #fbfdff;
}
.props-head b { font-weight: 600; }
.props-head .help { margin: 0; }
.prop-tabs {
    grid-template-columns: 196px 1fr;
    height: 31px;
    margin-bottom: 7px;
}
.field {
    display: flex;
    align-items: center;
    height: 24px;
    margin-bottom: 4px;
    color: #5c6066;
}
.field label { width: 136px; flex: none; }
.combo {
    position: relative;
    flex: 1;
    display: flex;
    height: 24px;
}
.combo::after {
    content: '';
    position: absolute;
    right: 5px;
    top: 11px;
    border: 3px solid transparent;
    border-top-color: #4b4f54;
    border-bottom: 0;
}
.field input, .field select {
    flex: 1;
    min-width: 0;
    height: 24px;
    padding: 0 4px;
    border: 1px solid #c3c6ca;
    border-radius: 3px;
    background: #fff;
    color: #4b4f54;
    appearance: none;
}
.field input:disabled {
    background: #f1f2f3;
    border-color: #dcdee1;
    color: #6b6f75;
}
.field .code { color: #b06152; }
.field .hint { color: #85898f; }
.eq {
    width: 15px;
    border: 1px solid #c3c6ca;
    border-right: 0;
    border-radius: 3px 0 0 3px;
    background: #dfe1e4;
    text-align: center;
    line-height: 22px;
}
.field .eq + select {
    border-left: 0;
    border-radius: 0 3px 3px 0;
}
h5 {
    display: flex;
    align-items: center;
    gap: 10px;
    margin: 0 0 4px;
    font-size: 12px;
    font-weight: 600;
    line-height: 16px;
}
h5.events { margin-top: 10px; }
h5::after {
    content: '';
    flex: 1;
    height: 1px;
    background: #dcdee1;
}

.status {
    flex: none;
    height: 17px;
    padding-right: 32px;
    display: flex;
    justify-content: flex-end;
    gap: 9px;
    border-top: 1px solid #dcdee1;
    color: #5c6066;
}
.status b { font-weight: 700; color: #272b30; }
.watermark {
    position: absolute;
    right: 28px;
    bottom: 24px;
    color: #e4e4e4;
    font: 25px/36px "Noto Sans", "Noto Sans CJK SC", sans-serif;
    text-shadow: 1px 1px 1px #333, -1px -1px 0 #aaa;
}
```
